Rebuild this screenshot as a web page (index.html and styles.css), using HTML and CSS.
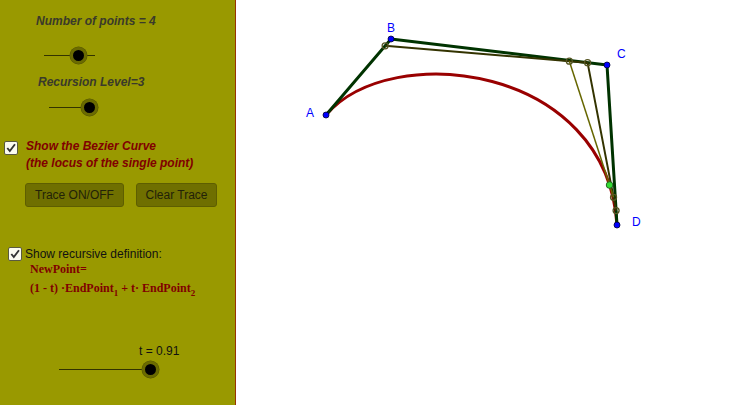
FILE: index.html
```html
<!DOCTYPE html>
<html>
<head>
<meta charset="utf-8">
<link rel="stylesheet" href="styles.css">
</head>
<body>
<div class="app">
  <div class="panel">
    <div class="label label-points">Number of points = 4</div>
    <div class="slider slider-points"><span class="track"></span><span class="knob" style="left:34px"></span></div>
    <div class="label label-rec">Recursion Level=3</div>
    <div class="slider slider-rec"><span class="track"></span><span class="knob" style="left:40px"></span></div>

    <div class="check-row check-bezier">
      <span class="cbox"><svg viewBox="0 0 13 13" width="13" height="13"><path d="M2.5 6.5 L5.2 9.8 L10.8 2.4" fill="none" stroke="#333" stroke-width="2"/></svg></span>
      <div class="bezier-text">Show the Bezier Curve<br>(the locus of the single point)</div>
    </div>

    <div class="buttons">
      <button class="btn btn-trace">Trace ON/OFF</button>
      <button class="btn btn-clear">Clear Trace</button>
    </div>

    <div class="check-row check-rec">
      <span class="cbox"><svg viewBox="0 0 13 13" width="13" height="13"><path d="M2.5 6.5 L5.2 9.8 L10.8 2.4" fill="none" stroke="#333" stroke-width="2"/></svg></span>
      <span class="rec-text">Show recursive definition:</span>
    </div>
    <div class="formula f1">NewPoint=</div>
    <div class="formula f2">(1 - t) ·EndPoint<sub>1</sub> + t· EndPoint<sub>2</sub></div>

    <div class="tlabel">t = 0.91</div>
    <div class="slider slider-t"><span class="track"></span><span class="knob" style="left:91px"></span></div>
  </div>

  <svg class="canvas" viewBox="236 0 503 405" width="503" height="405">
    <!-- Bezier curve (locus) -->
    <path d="M326 115 C391 39 607 65 617 225" fill="none" stroke="#990000" stroke-width="3" stroke-linecap="round"/>
    <!-- control polygon -->
    <polyline points="326,115 391,39 607,65 617,225" fill="none" stroke="#003300" stroke-width="3" stroke-linejoin="round"/>
    <!-- level 1 -->
    <polyline points="385.15,45.84 587.56,62.66 616.1,210.6" fill="none" stroke="#333300" stroke-width="2"/>
    <!-- level 2 -->
    <line x1="569.34" y1="61.15" x2="613.53" y2="197.28" stroke="#666600" stroke-width="1.5"/>
    <!-- intermediate points -->
    <g fill="none" stroke="#555522" stroke-width="1.3">
      <circle cx="385.15" cy="45.84" r="3"/>
      <circle cx="587.56" cy="62.66" r="3"/>
      <circle cx="616.1" cy="210.6" r="3"/>
      <circle cx="569.34" cy="61.15" r="3"/>
      <circle cx="613.53" cy="197.28" r="3"/>
    </g>
    <circle cx="609.55" cy="185.03" r="3.3" fill="#33dd33" stroke="#226622" stroke-width="1"/>
    <!-- main points -->
    <g fill="#0000ff" stroke="#000033" stroke-width="0.8">
      <circle cx="326" cy="115" r="3"/>
      <circle cx="391" cy="39" r="3"/>
      <circle cx="607" cy="65" r="3"/>
      <circle cx="617" cy="225" r="3"/>
    </g>
    <g class="pt-label" fill="#0000ff">
      <text x="306" y="117">A</text>
      <text x="387" y="32">B</text>
      <text x="617" y="58">C</text>
      <text x="632" y="226">D</text>
    </g>
  </svg>
</div>
</body>
</html>
```
FILE: styles.css
```css
* { box-sizing: border-box; }
html, body { margin: 0; padding: 0; background: #ffffff; }
body { font-family: "Liberation Sans", Arial, sans-serif; width: 739px; height: 405px; overflow: hidden; }

.app { display: flex; width: 739px; height: 405px; }

.panel {
  width: 236px;
  height: 405px;
  background: #999900;
  border-right: 1px solid #993300;
  flex: none;
  display: flex;
  flex-direction: column;
  position: relative;
}

.label {
  font-weight: bold;
  font-style: italic;
  font-size: 12px;
  line-height: 14px;
  color: #3a3a2a;
  white-space: nowrap;
}
.label-points { margin: 14px 0 0 36px; }
.label-rec { margin: 11px 0 0 38px; }

.slider { position: relative; height: 17px; }
.slider .track { position: absolute; left: 0; right: 0; top: 8px; height: 1px; background: #333300; }
.slider .knob {
  position: absolute; top: 0; width: 17px; height: 17px; margin-left: -8.5px;
  border-radius: 50%;
  background: #000;
  border: 3px solid #6b6b00;
  box-shadow: 0 0 0 0.5px #555500;
}
.slider-points { margin: 19px 0 0 44px; width: 51px; }
.slider-rec { margin: 10px 0 0 49px; width: 46px; }
.slider-t { margin: 3px 0 0 59px; width: 100px; }

.check-row { display: flex; align-items: flex-start; }
.cbox {
  width: 14px; height: 14px; flex: none;
  border: 1px solid #5a5a40;
  border-radius: 2px;
  background: #fbfbf0;
  display: flex; align-items: center; justify-content: center;
}
.cbox svg { display: block; width: 12px; height: 12px; }

.check-bezier { margin: 22px 0 0 4px; }
.check-bezier .cbox { margin-top: 3px; }
.bezier-text {
  margin-left: 8px;
  font-weight: bold; font-style: italic; font-size: 12px; line-height: 17px;
  color: #800000;
  white-space: nowrap;
}

.buttons { display: flex; gap: 12px; margin: 11px 0 0 25px; }
.btn {
  font-family: "Liberation Sans", Arial, sans-serif;
  font-size: 12px;
  color: #222208;
  background: #6f6f00;
  border: 1px solid #5e5e00;
  border-radius: 3px;
  height: 24px;
  padding: 0;
  margin: 0;
}
.btn-trace { width: 99px; }
.btn-clear { width: 81px; }

.check-rec { margin: 40px 0 0 8px; align-items: center; }
.rec-text { margin-left: 3px; font-size: 12px; color: #111; white-space: nowrap; }

.formula {
  font-family: "Liberation Serif", "Times New Roman", serif;
  font-weight: bold; font-size: 12px; color: #800000;
  margin-left: 30px; white-space: nowrap;
}
.f1 { margin-top: 1px; line-height: 14px; }
.f2 { margin-top: 3px; line-height: 18px; }
.f2 sub { font-size: 9px; vertical-align: -4px; line-height: 0; }

.tlabel { margin: 47px 0 0 139px; font-size: 12px; line-height: 14px; color: #111; }

.canvas { display: block; flex: none; }
.pt-label text { font-family: "Liberation Sans", Arial, sans-serif; font-size: 12px; }
```
